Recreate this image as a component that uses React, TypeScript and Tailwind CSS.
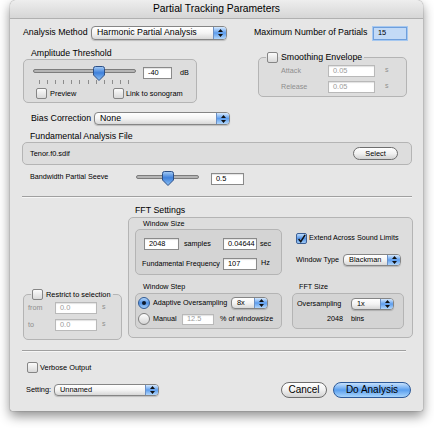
import React from 'react';

const Arrows = () => (
  <svg width="5" height="8" viewBox="0 0 5 8">
    <path d="M2.5 0 L5 3 H0 Z M2.5 8 L0 5 H5 Z" fill="#111" />
  </svg>
);

const Popup = ({ className, text, big }: { className: string; text: string; big?: boolean }) => (
  <div
    className={`flex items-stretch rounded-[4px] border border-[#858585] bg-linear-to-b from-white via-[#f4f4f4] to-[#d8d8d8] shadow-[0_1px_1px_rgba(0,0,0,0.18)] overflow-hidden ${className}`}
  >
    <span className={`flex-1 flex items-center pl-[5px] ${big ? 'text-[8.8px]' : 'text-[7.4px]'}`}>{text}</span>
    <span className="w-[13px] flex items-center justify-center border-l border-[#6a8fc4] bg-linear-to-b from-[#d6e9fd] via-[#5d9ded] to-[#b3d7fb]">
      <Arrows />
    </span>
  </div>
);

const Field = ({ className, value, disabled }: { className: string; value: string; disabled?: boolean }) => (
  <div
    className={`flex items-center bg-white pl-[4px] text-[7.4px] border shadow-[inset_0_1px_1px_rgba(0,0,0,0.12)] ${
      disabled ? 'text-[#9b9b9b] border-[#b9b9b9]' : 'text-black border-[#8a8a8a]'
    } ${className}`}
  >
    {value}
  </div>
);

const Check = ({ checked }: { checked?: boolean }) =>
  checked ? (
    <span className="w-[11px] h-[11px] shrink-0 rounded-[2px] border border-[#3c5f95] bg-linear-to-b from-[#bcdcfc] via-[#5594e6] to-[#9fcaf6] flex items-center justify-center">
      <svg width="10" height="10" viewBox="0 0 10 10">
        <path d="M1.8 5 L4.2 8 L9 0.5" stroke="#111" strokeWidth="1.7" fill="none" />
      </svg>
    </span>
  ) : (
    <span className="block w-[11px] h-[11px] shrink-0 rounded-[2px] border border-[#858585] bg-linear-to-b from-[#fbfbfb] to-[#d9d9d9]" />
  );

const Radio = ({ on }: { on?: boolean }) =>
  on ? (
    <span className="w-[12px] h-[12px] shrink-0 rounded-full border border-[#2f5a94] bg-linear-to-b from-[#b6d8fc] via-[#4f90e4] to-[#a5cdf7] flex items-center justify-center">
      <span className="w-[4px] h-[4px] rounded-full bg-[#0d1a2e]" />
    </span>
  ) : (
    <span className="block w-[12px] h-[12px] shrink-0 rounded-full border border-[#7f7f7f] bg-linear-to-b from-white to-[#d4d4d4]" />
  );

const Thumb = ({ id }: { id: string }) => (
  <svg width="12" height="15" viewBox="0 0 12 15">
    <defs>
      <linearGradient id={id} x1="0" y1="0" x2="0" y2="1">
        <stop offset="0" stopColor="#a7cdf6" />
        <stop offset="0.45" stopColor="#3f80da" />
        <stop offset="1" stopColor="#8ec2f5" />
      </linearGradient>
    </defs>
    <path d="M0.5 2.5 Q0.5 0.5 2.5 0.5 H9.5 Q11.5 0.5 11.5 2.5 V9 L6 14.5 L0.5 9 Z" fill={`url(#${id})`} stroke="#2c4f86" strokeWidth="1" />
  </svg>
);

const Box = ({ className, children }: { className: string; children?: React.ReactNode }) => (
  <div className={`rounded-[5px] border border-[#b4b4b4] bg-black/[0.04] ${className}`}>{children}</div>
);

const App: React.FC = () => {
  return (
    <div className="w-[434px] h-[428px] bg-white overflow-hidden font-['Liberation_Sans',Arial,sans-serif] text-black">
      <div className="ml-[10px] w-[413px] h-[411px] rounded-t-[6px] rounded-b-[2px] bg-[#e6e6e6] shadow-[0_5px_12px_rgba(0,0,0,0.45),0_0_1px_rgba(0,0,0,0.7)] flex flex-col overflow-hidden">
        <div className="h-[19px] shrink-0 flex items-center justify-center text-[10.3px] bg-linear-to-b from-[#eeeeee] to-[#d6d6d6] border-b border-[#b0b0b0]">
          Partial Tracking Parameters
        </div>

        {/* analysis method */}
        <div className="mt-[7px] h-[14px] flex items-center">
          <span className="ml-[13px] w-[68px] text-[8.8px]">Analysis Method</span>
          <Popup className="w-[136px] h-[14px]" text="Harmonic Partial Analysis" big />
          <span className="ml-[27px] w-[119px] text-[8.8px]">Maximum Number of Partials</span>
          <div className="w-[34px] h-[13px] flex items-center pl-[4px] text-[7.4px] bg-[#c3daf6] border border-[#6f9fdc] shadow-[0_0_0_1px_#a6c8f0]">
            15
          </div>
        </div>

        {/* amplitude + smoothing */}
        <div className="mt-[7px] flex items-start">
          <div className="ml-[13px] w-[174px]">
            <div className="h-[12px] leading-[12px] pl-[8px] text-[8.8px]">Amplitude Threshold</div>
            <Box className="h-[44px] flex flex-col">
              <div className="mt-[6px] h-[15px] flex items-start">
                <div className="relative ml-[9px] w-[103px] h-[15px]">
                  <div className="absolute left-0 right-0 top-[3px] h-[4px] rounded-full bg-[#b5b5b5] border border-[#7c7c7c]" />
                  <div className="absolute left-[60px] top-0">
                    <Thumb id="t1" />
                  </div>
                </div>
                <Field className="ml-[7px] mt-[1px] w-[29px] h-[12px]" value="-40" />
                <span className="ml-[8px] mt-[2px] text-[7.2px] leading-[9px]">dB</span>
              </div>
              <div className="ml-[15px] mt-[-1px] h-[4px] flex gap-[7.1px]">
                {Array.from({ length: 12 }).map((_, i) => (
                  <span key={i} className="w-px h-full bg-[#8c8c8c]" />
                ))}
              </div>
              <div className="mt-[4px] h-[11px] flex items-center">
                <div className="ml-[12px] w-[77px] flex items-center">
                  <Check />
                  <span className="ml-[3px] text-[7.4px]">Preview</span>
                </div>
                <div className="flex items-center">
                  <Check />
                  <span className="ml-[2px] text-[7.4px]">Link to sonogram</span>
                </div>
              </div>
            </Box>
          </div>

          <fieldset className="ml-[61px] mt-[5px] w-[149px] h-[45px] rounded-[5px] border border-[#b4b4b4] bg-black/[0.04]">
            <legend className="ml-[7px] px-[1px]">
              <span className="flex items-center h-[11px]">
                <Check />
                <span className="ml-[3px] pr-[1px] text-[8.8px]">Smoothing Envelope</span>
              </span>
            </legend>
            <div className="mt-[2px] h-[12px] flex items-center">
              <span className="ml-[22px] w-[47px] text-[7.2px] text-[#8e8e8e]">Attack</span>
              <Field className="w-[47px] h-[12px]" value="0.05" disabled />
              <span className="ml-[10px] self-start text-[7px] leading-[9px] text-[#8e8e8e]">s</span>
            </div>
            <div className="mt-[4px] h-[12px] flex items-center">
              <span className="ml-[22px] w-[47px] text-[7.2px] text-[#8e8e8e]">Release</span>
              <Field className="w-[47px] h-[12px]" value="0.05" disabled />
              <span className="ml-[10px] self-start text-[7px] leading-[9px] text-[#8e8e8e]">s</span>
            </div>
          </fieldset>
        </div>

        {/* bias */}
        <div className="mt-[9px] h-[13px] flex items-center">
          <span className="ml-[21px] w-[63px] text-[8.8px]">Bias Correction</span>
          <Popup className="w-[136px] h-[13px]" text="None" big />
        </div>

        {/* fundamental file */}
        <div className="mt-[6px] h-[11px] leading-[11px] ml-[20px] text-[8.8px]">Fundamental Analysis File</div>
        <Box className="ml-[12px] w-[390px] h-[23px] flex items-center justify-between">
          <span className="pl-[7px] text-[7.4px]">Tenor.f0.sdif</span>
          <button className="mr-[13px] w-[45px] h-[13px] rounded-full border border-[#6e6e6e] bg-linear-to-b from-white via-[#f1f1f1] to-[#d2d2d2] text-[7.4px] leading-none">
            Select
          </button>
        </Box>

        {/* bandwidth */}
        <div className="mt-[6px] h-[15px] flex items-start">
          <span className="ml-[20px] mt-[1px] w-[106px] text-[7.2px] leading-[9px]">Bandwidth Partial Seeve</span>
          <div className="relative w-[63px] h-[15px]">
            <div className="absolute left-0 right-0 top-[4px] h-[4px] rounded-full bg-[#b5b5b5] border border-[#7c7c7c]" />
            <div className="absolute left-[26px] top-0">
              <Thumb id="t2" />
            </div>
          </div>
          <Field className="ml-[12px] mt-[2px] w-[33px] h-[12px]" value="0.5" />
        </div>

        <div className="mt-[10px] ml-[12px] w-[390px] h-[2px] border-t border-[#a0a0a0] bg-[#f6f6f6]" />

        {/* lower section */}
        <div className="flex items-start">
          <fieldset className="ml-[13px] mt-[91px] w-[99px] h-[51px] rounded-[5px] border border-[#b4b4b4] bg-black/[0.04]">
            <legend className="ml-[7px] px-[1px]">
              <span className="flex items-center h-[11px]">
                <Check />
                <span className="ml-[3px] pr-[1px] text-[7.4px]">Restrict to selection</span>
              </span>
            </legend>
            <div className="mt-[2px] h-[12px] flex items-center">
              <span className="ml-[4px] w-[27px] text-[7.2px] text-[#8e8e8e]">from</span>
              <Field className="w-[42px] h-[12px]" value="0.0" disabled />
              <span className="ml-[5px] self-start text-[7px] leading-[9px] text-[#8e8e8e]">s</span>
            </div>
            <div className="mt-[5px] h-[12px] flex items-center">
              <span className="ml-[4px] w-[27px] text-[7.2px] text-[#8e8e8e]">to</span>
              <Field className="w-[42px] h-[12px]" value="0.0" disabled />
              <span className="ml-[5px] self-start text-[7px] leading-[9px] text-[#8e8e8e]">s</span>
            </div>
          </fieldset>

          <div className="ml-[6px] w-[285px]">
            <div className="mt-[7px] h-[11px] leading-[11px] pl-[7px] text-[8.8px]">FFT Settings</div>
            <Box className="mt-[1px] h-[121px]">
              <div className="flex items-start">
                <div className="ml-[6px] w-[147px]">
                  <div className="mt-[1px] h-[10px] leading-[10px] pl-[8px] text-[7.2px]">Window Size</div>
                  <Box className="h-[46px]">
                    <div className="mt-[8px] h-[12px] flex items-center text-[7.2px]">
                      <Field className="ml-[8px] w-[35px] h-[12px]" value="2048" />
                      <span className="ml-[5px] w-[39px]">samples</span>
                      <Field className="w-[34px] h-[12px]" value="0.04644" />
                      <span className="ml-[3px]">sec</span>
                    </div>
                    <div className="mt-[8px] h-[12px] flex items-center text-[7.2px]">
                      <span className="ml-[6px] w-[81px]">Fundamental Frequency</span>
                      <Field className="w-[34px] h-[12px]" value="107" />
                      <span className="ml-[4px] self-start leading-[9px]">Hz</span>
                    </div>
                  </Box>
                </div>
                <div className="ml-[14px] flex flex-col">
                  <div className="mt-[15px] h-[11px] flex items-center">
                    <Check checked />
                    <span className="ml-[2px] text-[7.2px]">Extend Across Sound Limits</span>
                  </div>
                  <div className="mt-[10px] h-[12px] flex items-center">
                    <span className="w-[47px] text-[7.2px]">Window Type</span>
                    <Popup className="w-[58px] h-[12px]" text="Blackman" />
                  </div>
                </div>
              </div>

              <div className="flex items-start">
                <div className="ml-[6px] w-[147px]">
                  <div className="mt-[7px] h-[10px] leading-[10px] pl-[8px] text-[7.2px]">Window Step</div>
                  <Box className="mt-[1px] h-[36px]">
                    <div className="mt-[3px] h-[12px] flex items-center text-[7.2px]">
                      <span className="ml-[2px] flex">
                        <Radio on />
                      </span>
                      <span className="ml-[3px] w-[78px]">Adaptive Oversampling</span>
                      <Popup className="w-[37px] h-[12px]" text="8x" />
                    </div>
                    <div className="mt-[4px] h-[12px] flex items-center text-[7.2px]">
                      <span className="ml-[2px] flex">
                        <Radio />
                      </span>
                      <span className="ml-[3px] w-[29px]">Manual</span>
                      <Field className="w-[32px] h-[11px]" value="12.5" disabled />
                      <span className="ml-[6px]">% of windowsize</span>
                    </div>
                  </Box>
                </div>
                <div className="ml-[10px] w-[112px]">
                  <div className="mt-[7px] h-[10px] leading-[10px] pl-[7px] text-[7.2px]">FFT Size</div>
                  <Box className="mt-[1px] h-[36px]">
                    <div className="mt-[4px] h-[12px] flex items-center text-[7.2px]">
                      <span className="ml-[4px] w-[54px]">Oversampling</span>
                      <Popup className="w-[43px] h-[12px]" text="1x" />
                    </div>
                    <div className="mt-[3px] h-[12px] flex items-center text-[7.2px]">
                      <span className="ml-[34px]">2048</span>
                      <span className="ml-[8px]">bins</span>
                    </div>
                  </Box>
                </div>
              </div>
            </Box>
          </div>
        </div>

        <div className="mt-[10px] ml-[12px] w-[384px] h-[2px] border-t border-[#a0a0a0] bg-[#f6f6f6]" />

        <div className="mt-[10px] h-[11px] flex items-center">
          <span className="ml-[17px] flex">
            <Check />
          </span>
          <span className="ml-[2px] text-[7.4px]">Verbose Output</span>
        </div>

        <div className="mt-[9px] h-[16px] flex items-center">
          <span className="ml-[16px] w-[28px] text-[7.4px]">Setting:</span>
          <Popup className="w-[105px] h-[12px]" text="Unnamed" />
          <button className="ml-[122px] w-[46px] h-[16px] rounded-full border border-[#6e6e6e] bg-linear-to-b from-white via-[#f1f1f1] to-[#d2d2d2] text-[10px] leading-none">
            Cancel
          </button>
          <button className="ml-[6px] w-[78px] h-[16px] rounded-full border border-[#2d5a99] bg-linear-to-b from-[#c6e1fc] via-[#5a9fee] to-[#a8d4fb] text-[10px] leading-none">
            Do Analysis
          </button>
        </div>
      </div>
    </div>
  );
};

export default App;
